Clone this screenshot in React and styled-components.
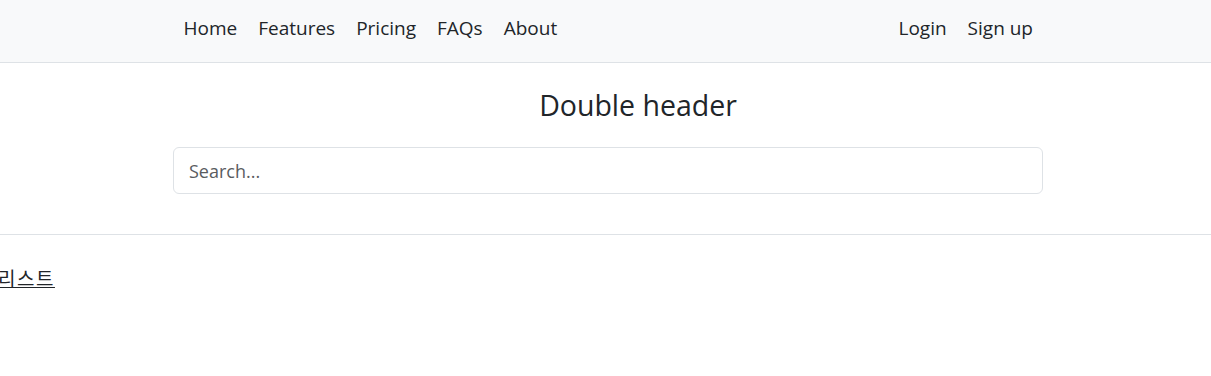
import React from 'react';
import styled, { createGlobalStyle } from 'styled-components';

const GlobalStyle = createGlobalStyle`
  body {
    margin: 0;
    background: #fff;
    color: #212529;
    font-family: "Open Sans", "Noto Sans CJK KR", sans-serif;
  }
`;

const App = () => {
  const mainLinks = ['Home', 'Features', 'Pricing', 'FAQs', 'About'];
  const userLinks = ['Login', 'Sign up'];

  return (
    <>
      <GlobalStyle />
      <TopBar>
        <Container>
          <NavList>
            {mainLinks.map((l) => (
              <NavLink key={l} href="#">{l}</NavLink>
            ))}
          </NavList>
          <NavList>
            {userLinks.map((l) => (
              <NavLink key={l} href="#">{l}</NavLink>
            ))}
          </NavList>
        </Container>
      </TopBar>

      <HeaderSection>
        <Container $column>
          <Title>Double header</Title>
          <SearchInput type="search" placeholder="Search..." />
        </Container>
      </HeaderSection>

      <Content>
        <ListLink href="#">리스트</ListLink>
      </Content>
    </>
  );
};

const TopBar = styled.nav`
  box-sizing: border-box;
  height: 63px;
  background-color: #f8f9fa;
  border-bottom: 1px solid #dee2e6;
  display: flex;
  align-items: center;
  padding: 0 0 6px 5px;
`;

const Container = styled.div`
  width: 870px;
  margin: 0 auto;
  display: flex;
  flex-direction: ${(p) => (p.$column ? 'column' : 'row')};
  justify-content: space-between;
`;

const NavList = styled.div`
  display: flex;
`;

const NavLink = styled.a`
  padding: 0 10.5px;
  font-size: 19px;
  line-height: 26px;
  color: #212529;
  text-decoration: none;

  &:last-child {
    padding-right: 10px;
  }
`;

const HeaderSection = styled.header`
  padding: 23px 0 40px 5px;
  border-bottom: 1px solid #dee2e6;
`;

const Title = styled.h1`
  margin: 0 0 23px 0;
  padding-left: 60px;
  text-align: center;
  font-size: 28.5px;
  font-weight: 400;
  line-height: 38px;
  color: #212529;
`;

const SearchInput = styled.input`
  box-sizing: border-box;
  width: 100%;
  height: 47px;
  padding: 0 15px;
  border: 1px solid #dee2e6;
  border-radius: 6px;
  font-family: "Open Sans", sans-serif;
  font-size: 18px;
  color: #212529;
  outline: none;

  &::placeholder {
    color: #595c5f;
  }
`;

const Content = styled.main`
  padding-top: 30px;
`;

const ListLink = styled.a`
  display: inline-block;
  margin-left: -2px;
  font-family: "Noto Sans CJK KR", sans-serif;
  font-size: 19px;
  letter-spacing: 1.5px;
  line-height: 26px;
  color: #212529;
  text-decoration: underline;
`;

export default App;
